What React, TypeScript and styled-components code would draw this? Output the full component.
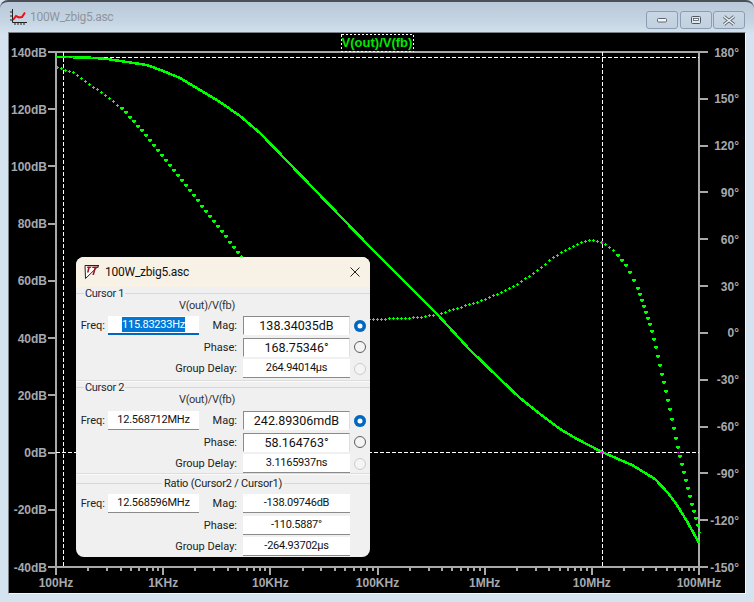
import React from 'react';
import styled, { createGlobalStyle } from 'styled-components';

const GlobalStyle = createGlobalStyle`
  html, body {
    margin: 0;
    padding: 0;
    background: #d5e3f0;
  }
`;

const Window = styled.div`
  position: relative;
  width: 754px;
  height: 602px;
  box-sizing: border-box;
  overflow: hidden;
  display: flex;
  flex-direction: column;
  border-top: 2px solid #4a4f55;
  border-radius: 8px 8px 0 0;
  background: linear-gradient(#b9c9d9 0, #c6d5e3 20px, #d5e3f0 32px);
`;

const TitleBar = styled.div`
  height: 30px;
  flex: none;
  display: flex;
  align-items: center;
  padding: 0 9px 0 10px;
`;

const WindowTitle = styled.span`
  margin-left: 3px;
  font: 12px Roboto, 'Noto Sans', sans-serif;
  letter-spacing: -0.3px;
  color: #8e959d;
  flex: 1;
`;

const WinButtons = styled.div`
  display: flex;
  gap: 1.5px;
  margin-top: 6px;
`;

const WinButton = styled.div`
  width: 30px;
  height: 16px;
  border: 1px solid #8c9db5;
  border-radius: 3px;
  background: linear-gradient(#c9d6e3, #c3d1df);
  display: flex;
  align-items: center;
  justify-content: center;
`;

const PlotFrame = styled.div`
  width: 738px;
  height: 562px;
  margin-left: 8px;
  box-sizing: border-box;
  background: #000;
  border-top: 1px solid #7c8186;
  border-left: 1px solid #7c8186;
  border-right: 1px solid #f4f8fb;
  border-bottom: 1px solid #f4f8fb;
`;

const PlotSvg = styled.svg`
  display: block;
  font-family: 'Liberation Sans', Arial, sans-serif;
  font-weight: 700;
  font-size: 12px;
`;

const Dialog = styled.div`
  position: absolute;
  left: 76px;
  top: 255px;
  width: 294px;
  height: 300px;
  border-radius: 8px;
  overflow: hidden;
  background: #f0f0f0;
  font-family: Roboto, 'Noto Sans', sans-serif;
  font-size: 11px;
  color: #1c1c1c;
`;

const DialogHeader = styled.div`
  height: 30px;
  box-sizing: border-box;
  display: flex;
  align-items: center;
  padding: 0 9px 0 8px;
  background: #f8f1e6;
`;

const DialogTitle = styled.span`
  flex: 1;
  margin-left: 5px;
  font-size: 12px;
  letter-spacing: -0.25px;
  color: #111;
`;

const Section = styled.section<{ $pad?: number }>`
  display: flex;
  flex-direction: column;
  padding-bottom: ${p => p.$pad ?? 0}px;
`;

const Legend = styled.div`
  height: 13px;
  line-height: 13px;
  display: flex;
  align-items: center;
  letter-spacing: -0.3px;
  color: #1b2a3a;
  &::before {
    content: '';
    width: 8px;
    height: 1px;
    background: #d8d8d8;
  }
  &::after {
    content: '';
    flex: 1;
    height: 1px;
    background: #d8d8d8;
  }
  span {
    padding: 0 1px;
  }
`;

const RatioLegend = styled(Legend)`
  margin: 3px 0 4px;
  letter-spacing: -0.2px;
  color: #222;
  &::before {
    flex: 1;
    width: auto;
  }
  span {
    padding: 0 2px;
  }
`;

const Divider = styled.div`
  height: 1px;
  background: #dcdcdc;
  box-shadow: 0 1px 0 #fafafa;
`;

const Expr = styled.div<{ $gap: number }>`
  width: 262px;
  text-align: center;
  height: 11px;
  line-height: 11px;
  margin-bottom: ${p => p.$gap}px;
  letter-spacing: -0.3px;
  color: #333;
`;

const Rows = styled.div`
  display: grid;
  grid-template-columns: 32px 91px minmax(0, 1fr) 107px 20px;
  grid-auto-rows: 19px;
  row-gap: 2.5px;
  align-items: center;
`;

const RowLabel = styled.span`
  text-align: right;
  padding-right: 6px;
  white-space: nowrap;
  color: #222;
`;

const FreqLabel = styled(RowLabel)`
  padding-right: 3px;
`;

const Wide = styled(RowLabel)`
  grid-column: 1 / 4;
`;

const Value = styled.div<{ $large?: boolean }>`
  height: 19px;
  line-height: 18px;
  box-sizing: border-box;
  text-align: center;
  background: #fff;
  white-space: nowrap;
  font-size: ${p => (p.$large ? '12.5px' : '11px')};
  letter-spacing: ${p => (p.$large ? '0' : '-0.25px')};
  color: #111;
  border-bottom: 1px solid #8a8a8a;
  ${p =>
    p.$large &&
    `border-top: 1px solid #8a8a8a;
     border-left: 1px solid #8a8a8a;
     border-right: 1px solid #ddd;
     border-bottom: 1px solid #fff;`}
`;

const ValueWide = styled(Value)`
  grid-column: 4;
`;

const FreqFocused = styled(Value)`
  border-bottom: 2px solid #0067c0;
`;

const Selected = styled.span`
  background: #0078d7;
  color: #fff;
  padding: 1px 0;
`;

const Radio = styled.span<{ $state: 'on' | 'off' | 'disabled' }>`
  justify-self: center;
  width: 12px;
  height: 12px;
  box-sizing: border-box;
  border-radius: 50%;
  ${p =>
    p.$state === 'on'
      ? 'background: #0067c0; box-shadow: inset 0 0 0 3.5px #0067c0, inset 0 0 0 12px #fff;'
      : p.$state === 'off'
      ? 'border: 1px solid #5c5c5c; background: #f4f4f4;'
      : 'border: 1px solid #cccccc; background: #f4f4f4;'}
`;

// plot geometry, in screen pixels; the svg itself starts at (9, 33)
const ox = 9;
const oy = 33;
const L = 56;
const R = 699;
const T = 52;
const B = 567;
const DEC = (R - L) / 6;
const DY = (B - T) / 9;

const magPts: [number, number][] = [
  [56, 57], [88, 57.5], [107, 59], [127, 62], [147, 65], [163, 71], [180, 78], [200, 90],
  [220, 102], [240, 116], [260, 133], [370, 247], [437, 314], [470, 350], [500, 379],
  [520, 398], [540, 414], [560, 429], [577, 439], [602, 452], [632, 465], [655, 479],
  [668, 493], [677, 505], [688, 523], [699, 543],
];

const phasePts: [number, number][] = [
  [57, 67], [73, 72], [88, 83], [108, 97], [121, 108], [133, 121], [145, 135], [157, 150],
  [169, 165], [181, 180], [193, 195], [205, 211], [221, 231], [233, 247], [241, 256],
  [290, 305], [330, 318], [370, 319], [403, 318], [420, 317], [437, 314], [453, 309],
  [470, 304], [487, 298], [503, 291], [520, 282], [537, 270], [553, 257], [570, 247],
  [587, 240], [593, 240], [602, 242], [615, 252], [627, 268], [637, 288], [643, 306],
  [650, 327], [655, 347], [667, 400], [678, 452], [690, 500], [699, 532],
];

function yAt(pts: [number, number][], x: number) {
  for (let i = 1; i < pts.length; i++) {
    if (x <= pts[i][0]) {
      const [x0, y0] = pts[i - 1];
      const [x1, y1] = pts[i];
      return y0 + ((x - x0) / (x1 - x0)) * (y1 - y0);
    }
  }
  return pts[pts.length - 1][1];
}

function phaseMarkers() {
  let d = '';
  let x = 57;
  while (x <= 699) {
    const y = Math.round(yAt(phasePts, x));
    const sx = x - ox;
    const sy = y - oy;
    const slope = Math.abs(yAt(phasePts, x + 2) - yAt(phasePts, x)) / 2;
    d += `M${sx - 1} ${sy + 0.5}h3M${sx + 0.5} ${sy - 1}v3`;
    // steep parts of the trace pile up into small blobs
    if (slope > 1) d += `M${sx - 1} ${sy - 0.5}h4M${sx - 1} ${sy + 0.5}h4M${sx} ${sy + 1.5}h2`;
    x += slope > 2 ? 2 : 4;
  }
  return d;
}

const leftLabels = ['140dB', '120dB', '100dB', '80dB', '60dB', '40dB', '20dB', '0dB', '-20dB', '-40dB'];
const rightLabels = ['180°', '150°', '120°', '90°', '60°', '30°', '0°', '-30°', '-60°', '-90°', '-120°', '-150°'];
const bottomLabels = ['100Hz', '1KHz', '10KHz', '100KHz', '1MHz', '10MHz', '100MHz'];

const Plot: React.FC = () => {
  const px = (x: number) => x - ox;
  const py = (y: number) => y - oy;
  const rightStep = (B - T) / 11;
  return (
    <PlotSvg width={736} height={560} viewBox="0 0 736 560">
      <g fill="none" stroke="#a9a9a9" strokeWidth={2} shapeRendering="crispEdges">
        <path d={`M${px(L)} ${py(T)}H${px(R)}V${py(B)}H${px(L)}Z`} />
        {leftLabels.map((_, i) => (
          <path key={i} d={`M${px(L - 8)} ${py(T + i * DY)}H${px(L)}`} />
        ))}
        {rightLabels.map((_, i) => (
          <path key={i} d={`M${px(R)} ${py(T + i * rightStep)}H${px(R + 9)}`} />
        ))}
        {bottomLabels.map((_, i) => (
          <path key={i} d={`M${px(L + i * DEC)} ${py(B)}v8`} />
        ))}
        {[0, 1, 2, 3, 4, 5].map(d =>
          [2, 3, 4, 5, 6, 7, 8, 9].map(m => (
            <path key={`${d}-${m}`} d={`M${px(L + (d + Math.log10(m)) * DEC)} ${py(B)}v4`} />
          ))
        )}
      </g>

      <g fill="none" stroke="#fff" strokeWidth={1} strokeDasharray="4 2" shapeRendering="crispEdges">
        <path d={`M${px(L)} ${py(57)}H${px(R)}`} />
        <path d={`M${px(63)} ${py(T)}V${py(B)}`} />
        <path d={`M${px(L)} ${py(452)}H${px(R)}`} />
        <path d={`M${px(602)} ${py(T)}V${py(B)}`} />
      </g>

      <polyline
        fill="none"
        stroke="#00ff00"
        strokeWidth={2.5}
        shapeRendering="crispEdges"
        points={magPts.map(([x, y]) => `${px(x)},${py(y)}`).join(' ')}
      />
      <path d={phaseMarkers()} fill="none" stroke="#00ff00" strokeWidth={1} shapeRendering="crispEdges" />

      <g fill="#ff00ff" shapeRendering="crispEdges">
        <rect x={px(66)} y={py(57)} width={3} height={1} />
        <rect x={px(72)} y={py(57)} width={3} height={1} />
        <rect x={px(90)} y={py(57)} width={3} height={1} />
        <rect x={px(600)} y={py(452)} width={3} height={1} />
        <rect x={px(677)} y={py(452)} width={2} height={1} />
        <rect x={px(602)} y={py(241)} width={1} height={3} />
      </g>

      <g fill="#a6a9ad">
        {leftLabels.map((t, i) => (
          <text key={t} x={px(47)} y={py(T + i * DY + 4.5)} textAnchor="end">
            {t}
          </text>
        ))}
        {rightLabels.map((t, i) => (
          <text key={t} x={px(739)} y={py(T + i * rightStep + 4.5)} textAnchor="end">
            {t}
          </text>
        ))}
        {bottomLabels.map((t, i) => (
          <text key={t} x={px(L + i * DEC)} y={py(587)} textAnchor="middle">
            {t}
          </text>
        ))}
      </g>

      <text x={px(377)} y={py(46.5)} textAnchor="middle" fill="#00e800" fontSize={13}>
        V(out)/V(fb)
      </text>
      <rect
        x={px(341) + 0.5}
        y={py(34) + 0.5}
        width={72}
        height={17}
        fill="none"
        stroke="#fff"
        strokeDasharray="2 2"
        shapeRendering="crispEdges"
      />
    </PlotSvg>
  );
};

const PlotIcon = () => (
  <svg width="17" height="16" viewBox="0 0 17 16">
    <path d="M2.5 0v13.5H17M0 3h2M0 7h2M0 11h2M5 14v2M8 14v2M11 14v2M14 14v2" stroke="#222" fill="none" />
    <path d="M3 11 L6 7 L9 8.5 L12 8 L15 3.5" stroke="#e8121a" strokeWidth="2" fill="none" />
  </svg>
);

const LtIcon = () => (
  <svg width="16" height="16" viewBox="0 0 16 16">
    <path d="M1 1.5H15L1.5 14.5Z" fill="#fff" stroke="#222" />
    <path d="M3.5 2.5H8L6.5 4H5.7L4.6 8.5H3L4 4H3Z M8.5 2.5H15L14 4H12L10 11H8.4L10.3 4H8Z" fill="#9c1820" />
  </svg>
);

const App: React.FC = () => (
  <>
    <GlobalStyle />
    <Window>
      <TitleBar>
        <PlotIcon />
        <WindowTitle>100W_zbig5.asc</WindowTitle>
        <WinButtons>
          <WinButton>
            <svg width="12" height="6" viewBox="0 0 12 6">
              <rect x="1.5" y="1.5" width="9" height="3.5" rx="1" fill="#f4f7fa" stroke="#5d6670" />
            </svg>
          </WinButton>
          <WinButton>
            <svg width="12" height="10" viewBox="0 0 12 10">
              <rect x="1.5" y="1.5" width="9" height="7" rx="1" fill="#dfe7ef" stroke="#4f5862" />
              <rect x="3.5" y="3.5" width="5" height="2" fill="#fff" stroke="#4f5862" strokeWidth="0.8" />
            </svg>
          </WinButton>
          <WinButton>
            <svg width="14" height="11" viewBox="0 0 14 11">
              <path d="M2 1.5 L12 9.5 M12 1.5 L2 9.5" stroke="#5d6670" strokeWidth="3.2" />
              <path d="M2 1.5 L12 9.5 M12 1.5 L2 9.5" stroke="#f4f7fa" strokeWidth="1.4" />
            </svg>
          </WinButton>
        </WinButtons>
      </TitleBar>
      <PlotFrame>
        <Plot />
      </PlotFrame>

      <Dialog>
        <DialogHeader>
          <LtIcon />
          <DialogTitle>100W_zbig5.asc</DialogTitle>
          <svg width="12" height="12" viewBox="0 0 12 12">
            <path d="M1.5 1.5 L10.5 10.5 M10.5 1.5 L1.5 10.5" stroke="#222" strokeWidth="1" />
          </svg>
        </DialogHeader>

        <Section $pad={2}>
          <Legend><span>Cursor 1</span></Legend>
          <Expr $gap={5}>V(out)/V(fb)</Expr>
          <Rows>
            <FreqLabel>Freq:</FreqLabel>
            <FreqFocused><Selected>115.83233Hz</Selected></FreqFocused>
            <RowLabel>Mag:</RowLabel>
            <Value $large>138.34035dB</Value>
            <Radio $state="on" />
            <Wide>Phase:</Wide>
            <ValueWide $large>168.75346°</ValueWide>
            <Radio $state="off" />
            <Wide>Group Delay:</Wide>
            <ValueWide>264.94014µs</ValueWide>
            <Radio $state="disabled" />
          </Rows>
        </Section>
        <Divider />

        <Section>
          <Legend><span>Cursor 2</span></Legend>
          <Expr $gap={6}>V(out)/V(fb)</Expr>
          <Rows>
            <FreqLabel>Freq:</FreqLabel>
            <Value>12.568712MHz</Value>
            <RowLabel>Mag:</RowLabel>
            <Value $large>242.89306mdB</Value>
            <Radio $state="on" />
            <Wide>Phase:</Wide>
            <ValueWide $large>58.164763°</ValueWide>
            <Radio $state="off" />
            <Wide>Group Delay:</Wide>
            <ValueWide>3.1165937ns</ValueWide>
            <Radio $state="disabled" />
          </Rows>
        </Section>
        <Divider />

        <Section>
          <RatioLegend><span>Ratio (Cursor2 / Cursor1)</span></RatioLegend>
          <Rows>
            <FreqLabel>Freq:</FreqLabel>
            <Value>12.568596MHz</Value>
            <RowLabel>Mag:</RowLabel>
            <Value>-138.09746dB</Value>
            <span />
            <Wide>Phase:</Wide>
            <ValueWide>-110.5887°</ValueWide>
            <span />
            <Wide>Group Delay:</Wide>
            <ValueWide>-264.93702µs</ValueWide>
            <span />
          </Rows>
        </Section>
      </Dialog>
    </Window>
  </>
);

export default App;
